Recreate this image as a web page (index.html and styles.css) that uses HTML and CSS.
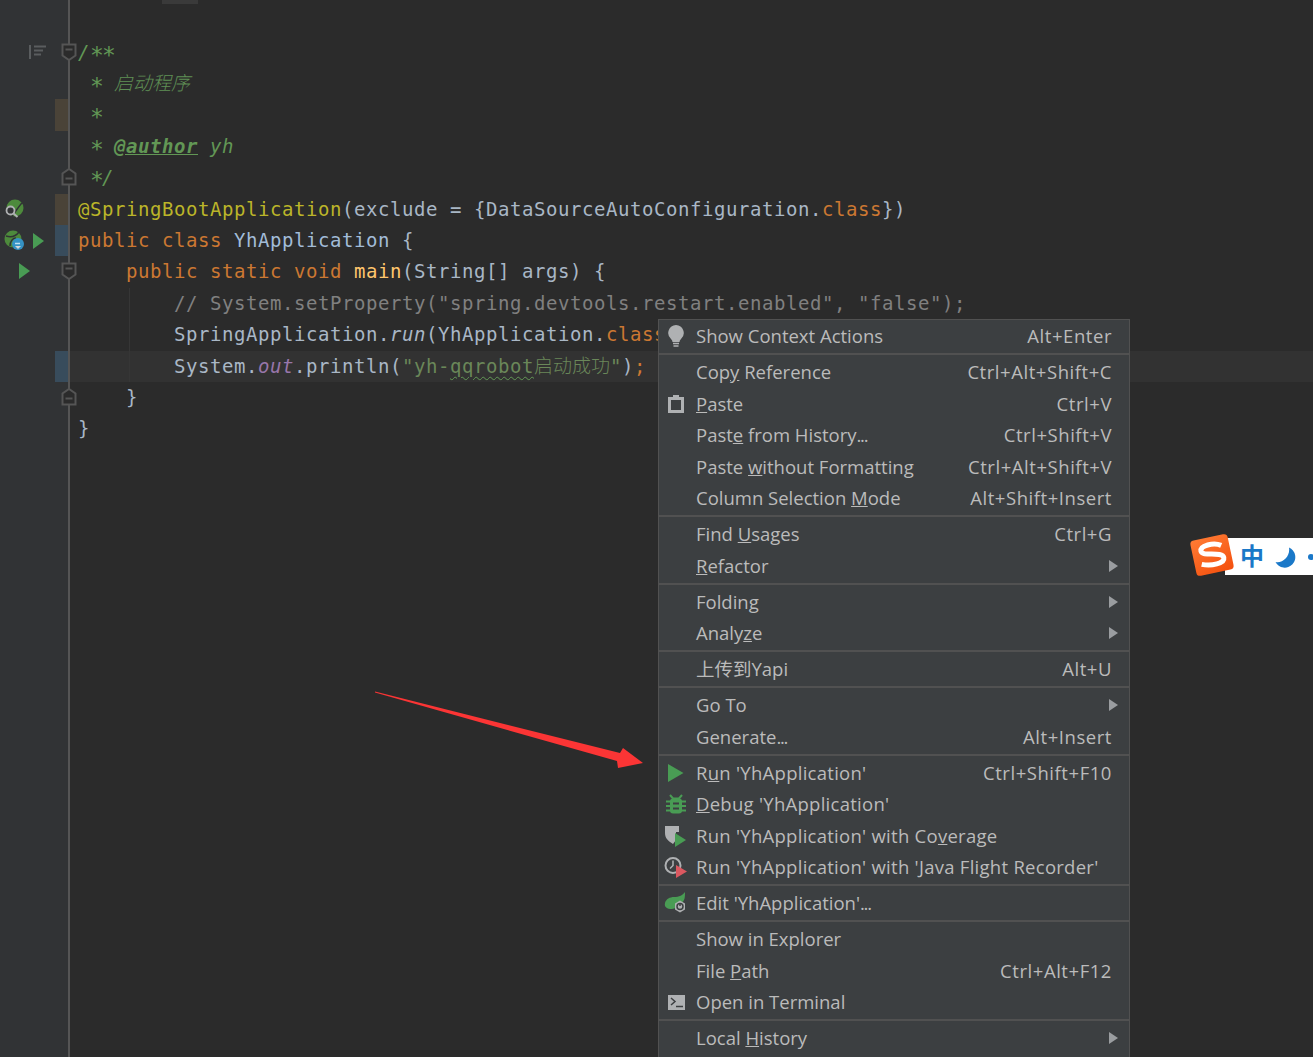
FILE: index.html
```html
<!DOCTYPE html>
<html lang="en">
<head>
<meta charset="utf-8">
<title>YhApplication</title>
<link rel="stylesheet" href="styles.css">
</head>
<body>
<div class="editor">
  <div class="tab-stub"></div>
  <div class="line"><div class="gut"><svg class="structure" width="18" height="16" viewBox="0 0 18 16"><path d="M1 1v14" stroke="#5a5d5f" stroke-width="2"/><path d="M5 2.500h12M5 6.500h9M5 10.500h7" stroke="#5a5d5f" stroke-width="2"/></svg></div><div class="mark"></div><svg class="fold" width="16" height="20" viewBox="0 0 16 20"><path d="M1.500 2.500h13v11l-6.500 4.500-6.500-4.500z" fill="#2b2b2b" stroke="#555" stroke-width="2"/><path d="M4.500 7.500h7" stroke="#555" stroke-width="2"/></svg><div class="code doc">/<span class="star">*</span><span class="star">*</span></div></div>
  <div class="line"><div class="gut"></div><div class="mark"></div><div class="code doc"> <span class="star">*</span> <span class="cjk">启动程序</span></div></div>
  <div class="line"><div class="gut"></div><div class="mark changed"></div><div class="code doc"> <span class="star">*</span></div></div>
  <div class="line"><div class="gut"></div><div class="mark"></div><div class="code doc"> <span class="star">*</span> <span class="tag">@author</span> yh</div></div>
  <div class="line"><div class="gut"></div><div class="mark"></div><svg class="fold" width="16" height="20" viewBox="0 0 16 20"><path d="M1.500 17.500v-11l6.500-4.500 6.500 4.500v11z" fill="#2b2b2b" stroke="#555" stroke-width="2"/><path d="M4.500 11.500h7" stroke="#555" stroke-width="2"/></svg><div class="code doc"> <span class="star">*</span>/</div></div>
  <div class="line"><div class="gut"><svg class="g-spring" width="20" height="20" viewBox="0 0 20 20"><circle cx="11" cy="9" r="8.500" fill="#4d8a3c"/><path d="M8 17C12 12 15 7 18 4" stroke="#313335" stroke-width="1.500" fill="none"/><circle cx="6.500" cy="11.500" r="4" fill="#313335" stroke="#afb1b3" stroke-width="1.800"/><path d="M9.500 14.500l4 3.500" stroke="#afb1b3" stroke-width="2"/></svg></div><div class="mark changed"></div><div class="code"><span class="ann">@SpringBootApplication</span>(exclude = {DataSourceAutoConfiguration.<span class="kw">class</span>})</div></div>
  <div class="line"><div class="gut"><svg class="g-spring" width="20" height="20" viewBox="0 0 20 20"><circle cx="9" cy="9" r="8.500" fill="#4d8a3c"/><path d="M2 6C8 8 12 6 15 2M6 16C6 11 9 8 12 8" stroke="#313335" stroke-width="1.500" fill="none"/><circle cx="14" cy="14" r="6" fill="#3592c4"/><path d="M11 13.500h5" stroke="#bfe0f0" stroke-width="1.500"/><path d="M11 16h6l-3 3z" fill="#d8d8d8"/></svg><svg class="g-play1" width="12" height="16" viewBox="0 0 12 16"><path d="M0 0l11 8-11 8z" fill="#499c54"/></svg></div><div class="mark added"></div><div class="code"><span class="kw">public class</span> <span class="cls">YhApplication</span> {</div></div>
  <div class="line"><div class="gut"><svg class="g-play2" width="12" height="16" viewBox="0 0 12 16"><path d="M0 0l11 8-11 8z" fill="#499c54"/></svg></div><div class="mark"></div><svg class="fold" width="16" height="20" viewBox="0 0 16 20"><path d="M1.500 2.500h13v11l-6.500 4.500-6.500-4.500z" fill="#2b2b2b" stroke="#555" stroke-width="2"/><path d="M4.500 7.500h7" stroke="#555" stroke-width="2"/></svg><div class="code">    <span class="kw">public static void</span> <span class="fn">main</span>(String[] args) {</div></div>
  <div class="line"><div class="gut"></div><div class="mark"></div><div class="code">    <span class="guide"></span>    <span class="cmt">// System.setProperty("spring.devtools.restart.enabled", "false");</span></div></div>
  <div class="line"><div class="gut"></div><div class="mark"></div><div class="code">    <span class="guide"></span>    SpringApplication.<i>run</i>(YhApplication.<span class="kw">class</span></div></div>
  <div class="line current"><div class="gut"></div><div class="mark added"></div><div class="code">    <span class="guide"></span>    System.<i class="field">out</i>.println(<span class="str">"yh-<span class="typo">qqrobot</span><span class="cjk-s">启动成功</span>"</span>)<span class="kw">;</span></div></div>
  <div class="line"><div class="gut"></div><div class="mark"></div><svg class="fold" width="16" height="20" viewBox="0 0 16 20"><path d="M1.500 17.500v-11l6.500-4.500 6.500 4.500v11z" fill="#2b2b2b" stroke="#555" stroke-width="2"/><path d="M4.500 11.500h7" stroke="#555" stroke-width="2"/></svg><div class="code">    }</div></div>
  <div class="line"><div class="gut"></div><div class="mark"></div><div class="code">}</div></div>
</div>

<div class="menu">
  <div class="item"><span class="ico"><svg width="18" height="24" viewBox="0 0 18 24"><path d="M9 1a8 8 0 0 0-5 14c1 1 1.500 2 1.500 3h7c0-1 .5-2 1.500-3A8 8 0 0 0 9 1z" fill="#afb1b3"/><path d="M6 19.500h6M6.500 22h5" stroke="#afb1b3" stroke-width="1.500"/></svg></span><span class="label">Show Context Actions</span><span class="key">Alt+Enter</span></div>
  <div class="sep"></div>
  <div class="item"><span class="ico"></span><span class="label">Cop<u>y</u> Reference</span><span class="key">Ctrl+Alt+Shift+C</span></div>
  <div class="item"><span class="ico"><svg width="16" height="19" viewBox="0 0 16 19"><path d="M0 3h5V1h6v2h5v16H0z" fill="#afb1b3"/><path d="M3 6h10v10H3z" fill="#3c3f41"/></svg></span><span class="label"><u>P</u>aste</span><span class="key">Ctrl+V</span></div>
  <div class="item"><span class="ico"></span><span class="label">Past<u>e</u> from History<span class="dots">...</span></span><span class="key">Ctrl+Shift+V</span></div>
  <div class="item"><span class="ico"></span><span class="label">Paste <u>w</u>ithout Formatting</span><span class="key">Ctrl+Alt+Shift+V</span></div>
  <div class="item"><span class="ico"></span><span class="label">Column Selection <u>M</u>ode</span><span class="key">Alt+Shift+Insert</span></div>
  <div class="sep"></div>
  <div class="item"><span class="ico"></span><span class="label">Find <u>U</u>sages</span><span class="key">Ctrl+G</span></div>
  <div class="item"><span class="ico"></span><span class="label"><u>R</u>efactor</span><span class="arrow"></span></div>
  <div class="sep"></div>
  <div class="item"><span class="ico"></span><span class="label">Folding</span><span class="arrow"></span></div>
  <div class="item"><span class="ico"></span><span class="label">Analy<u>z</u>e</span><span class="arrow"></span></div>
  <div class="sep"></div>
  <div class="item"><span class="ico"></span><span class="label">上传到Yapi</span><span class="key">Alt+U</span></div>
  <div class="sep"></div>
  <div class="item"><span class="ico"></span><span class="label">Go To</span><span class="arrow"></span></div>
  <div class="item"><span class="ico"></span><span class="label">Generate<span class="dots">...</span></span><span class="key">Alt+Insert</span></div>
  <div class="sep"></div>
  <div class="item"><span class="ico"><svg width="16" height="18" viewBox="0 0 16 18"><path d="M0 0l15.500 9L0 18z" fill="#499c54"/></svg></span><span class="label wide">R<u>u</u>n 'YhApplication'</span><span class="key">Ctrl+Shift+F10</span></div>
  <div class="item"><span class="ico"><svg width="20" height="20" viewBox="0 0 20 20"><path d="M4 1l3 3.500h6L16 1" stroke="#499c54" stroke-width="2" fill="none"/><rect x="4" y="4.500" width="12" height="15" rx="3" fill="#499c54"/><path d="M0 7.500h20M0 12h20M0 16.500h20" stroke="#499c54" stroke-width="2"/><path d="M7 9.500h6M7 14.500h6" stroke="#3c3f41" stroke-width="2"/></svg></span><span class="label wide"><u>D</u>ebug 'YhApplication'</span></div>
  <div class="item"><span class="ico"><svg width="24" height="22" viewBox="0 0 24 22"><path d="M1 1h14v6h-3v8l-3 4C4 16 1 13 1 8z" fill="#afb1b3"/><path d="M11 8l11 7-11 7z" fill="#499c54"/></svg></span><span class="label wide">Run 'YhApplication' with Co<u>v</u>erage</span></div>
  <div class="item"><span class="ico"><svg width="24" height="22" viewBox="0 0 24 22"><circle cx="9" cy="9.500" r="7.500" fill="none" stroke="#afb1b3" stroke-width="2"/><path d="M9 4.500v5l-3 3" fill="none" stroke="#afb1b3" stroke-width="1.500"/><path d="M12 9l11 6.500L12 22z" fill="#db5860"/></svg></span><span class="label wide">Run 'YhApplication' with 'Java Flight Recorder'</span></div>
  <div class="sep"></div>
  <div class="item"><span class="ico"><svg width="24" height="22" viewBox="0 0 24 22"><path d="M21 0c0 5 0 9-4 11l-5 5-4 1C3 17 0 15 1 11c1-4 5-6 9-6 5 0 9-2 11-5z" fill="#499c54"/><path d="M16 8.500l5 3v6l-5 3-5-3v-6z" fill="#afb1b3"/><circle cx="16" cy="14.500" r="3" fill="none" stroke="#3c3f41" stroke-width="1.500"/><path d="M16 11v3" stroke="#3c3f41" stroke-width="1.500"/></svg></span><span class="label">Edit 'YhApplication'<span class="dots">...</span></span></div>
  <div class="sep"></div>
  <div class="item"><span class="ico"></span><span class="label">Show in Explorer</span></div>
  <div class="item"><span class="ico"></span><span class="label">File <u>P</u>ath</span><span class="key">Ctrl+Alt+F12</span></div>
  <div class="item"><span class="ico"><svg width="17" height="15" viewBox="0 0 17 15"><rect width="17" height="15" fill="#afb1b3"/><path d="M3 3l4 3.500L3 10" stroke="#3c3f41" stroke-width="1.500" fill="none"/><path d="M8 11.500h7" stroke="#3c3f41" stroke-width="1.500"/></svg></span><span class="label">Open in Terminal</span></div>
  <div class="sep"></div>
  <div class="item"><span class="ico"></span><span class="label">Local <u>H</u>istory</span><span class="arrow"></span></div>
</div>

<svg class="pointer" width="270" height="80" viewBox="375 690 270 80"><path d="M375 691.500L620 753L623 748L643 763L618 768L617 761L375 692.500z" fill="#fb3535"/></svg>

<div class="ime">
  <div class="ime-logo"><svg width="30" height="28" viewBox="0 0 30 28"><path d="M26 6.500C19 1.500 5 2.500 5 8c0 6 21 4 21 11 0 6-14 6-23 2" fill="none" stroke="#fff" stroke-width="5"/></svg></div>
  <div class="ime-bar"><span class="ime-zh">中</span><svg class="ime-moon" width="22" height="22" viewBox="0 0 22 22"><path d="M14 0.500A10.500 10.500 0 1 1 0.500 15C8 16.500 15.500 9 14 0.500z" fill="#1a78c8"/></svg><span class="ime-cut"></span></div>
</div>
</body>
</html>
```
FILE: styles.css
```css
html, body {
  margin: 0;
  padding: 0;
  height: 100%;
  overflow: hidden;
  background: #2b2b2b;
}
.editor {
  position: relative;
  box-sizing: border-box;
  height: 1057px;
  padding-top: 36.600px;
  background: linear-gradient(90deg, #313335 68px, #555 68px, #555 70px, #2b2b2b 70px);
  font: 19px/31.400px "DejaVu Sans Mono", monospace;
  letter-spacing: .56px;
  color: #a9b7c6;
}
.tab-stub {
  position: absolute;
  left: 162px;
  top: 0;
  width: 36px;
  height: 4px;
  background: #3a3a3a;
}
.line {
  position: relative;
  display: flex;
  height: 31.400px;
}
.gut {
  position: relative;
  width: 55px;
  flex: none;
}
.mark {
  width: 13px;
  margin-right: 2px;
  flex: none;
}
.changed { background: #4a4338; }
.added { background: #384c5c; }
.current .code { background: #323232; }
.code {
  flex: 1;
  padding-left: 8px;
  white-space: pre;
}
.fold {
  position: absolute;
  left: 61px;
  top: 5px;
}
.structure { position: absolute; left: 29px; top: 7px; }
.g-spring { position: absolute; left: 4px; top: 5px; }
.g-play1 { position: absolute; left: 33px; top: 8px; }
.g-play2 { position: absolute; left: 19px; top: 7px; }
.doc { color: #629755; font-style: italic; }
.star {
  font-size: 23px;
  line-height: 0;
  vertical-align: -4px;
  letter-spacing: -1.850px;
}
.tag { font-weight: bold; text-decoration: underline; }
.cjk {
  font-family: "Noto Sans CJK SC", sans-serif;
  font-weight: 300;
  letter-spacing: 0;
  line-height: 0;
  color: #5f8f55;
}
.ann { color: #bbb529; }
.kw { color: #cc7832; }
.cls { color: #a2bcd8; }
.fn { color: #ffc66d; }
.cmt { color: #808080; }
.str { color: #6a8759; }
.field { color: #9876aa; }
.typo { text-decoration: underline wavy #629755 1px; text-underline-offset: 3px; }
.cjk-s {
  font-family: "Noto Sans CJK SC", sans-serif;
  letter-spacing: 0;
  font-weight: 300;
  line-height: 0;
}
.guide {
  display: inline-block;
  width: 0;
  height: 31.400px;
  vertical-align: top;
  border-left: 1px solid #363636;
  margin-left: 3px;
  margin-right: -4px;
}

.menu {
  position: absolute;
  left: 658px;
  top: 319px;
  width: 470px;
  padding: .250px 0 6px;
  background: #3c3f41;
  border: 1px solid #515151;
  font: 18.500px/31.500px "Open Sans", "Noto Sans CJK SC", sans-serif;
  color: #bbbbbb;
}
.item {
  display: flex;
  height: 31.500px;
  padding-right: 11px;
  white-space: nowrap;
}
.ico {
  width: 37px;
  flex: none;
  display: flex;
  align-items: center;
  justify-content: center;
  padding-right: 3px;
  box-sizing: border-box;
}
.label { flex: 1; }
.wide { letter-spacing: .27px; }
.dots { letter-spacing: -1.300px; }
.key { margin-right: 6px; letter-spacing: .55px; }
.arrow {
  align-self: center;
  width: 0;
  height: 0;
  border-left: 9px solid #9a9da0;
  border-top: 6px solid transparent;
  border-bottom: 6px solid transparent;
}
.sep {
  height: 2px;
  margin: 1.250px 0;
  background: #515151;
}
.pointer {
  position: absolute;
  left: 375px;
  top: 690px;
}
.ime {
  position: absolute;
  left: 1190px;
  top: 534px;
  width: 123px;
  height: 44px;
}
.ime-bar {
  position: absolute;
  left: 35px;
  top: 4px;
  right: 0;
  height: 37px;
  background: #fff;
  display: flex;
  align-items: center;
  gap: 12px;
  padding-left: 15px;
  overflow: hidden;
}
.ime-zh {
  flex: none;
  font: bold 24px/1 "Noto Sans CJK SC", sans-serif;
  color: #1a78c8;
  margin-bottom: 3px;
}
.ime-moon { flex: none; margin-top: 3px; margin-left: -1px; }
.ime-cut {
  flex: none;
  width: 6px;
  height: 6px;
  border-radius: 50%;
  background: #1a78c8;
  margin-left: -1px;
}
.ime-logo {
  position: absolute;
  left: 3px;
  top: 3px;
  width: 38px;
  height: 36px;
  z-index: 1;
  border-radius: 4px;
  background: linear-gradient(160deg, #ff7b34, #f4500e);
  transform: rotate(-12deg);
  display: flex;
  align-items: center;
  justify-content: center;
}
```
